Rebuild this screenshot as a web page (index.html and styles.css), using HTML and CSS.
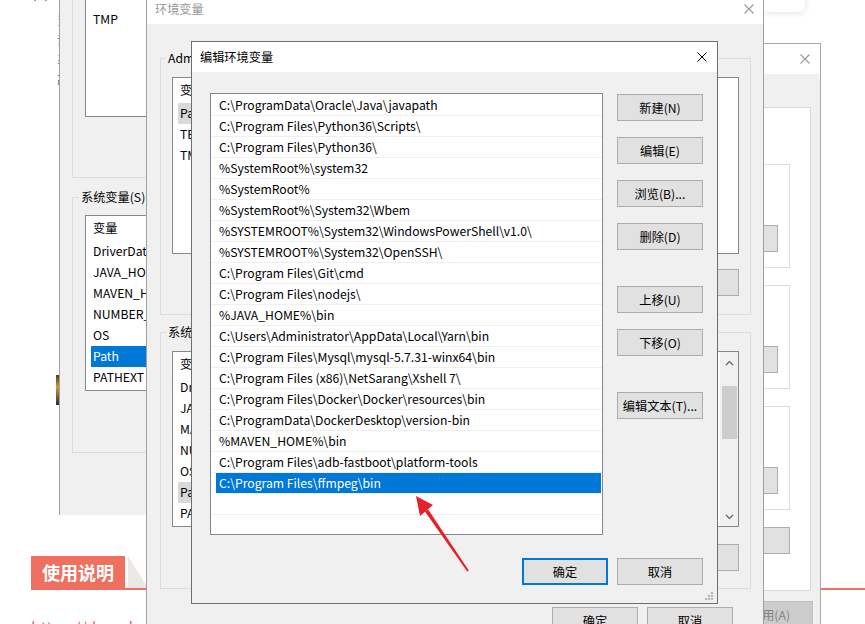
FILE: index.html
```html
<!doctype html>
<html>
	<head>
		<meta charset="utf-8">
		<title>编辑环境变量</title>
		<link rel="stylesheet" href="styles.css">
	</head>
<body>

	<!--page start-->
	<div class="page">
		<div class="top_text">新建(N)...&nbsp;&nbsp;&nbsp;编辑(E)...&nbsp;&nbsp;&nbsp;删除(D)</div>
		<div class="marks">
			<p>当</p><p>设</p><p>系</p><p>高</p>
		</div>
		<div class="shot"></div>
		<div class="usage">
			<span class="tag">使用说明</span>
			<span class="fold"></span>
		</div>
		<div class="link">https://download.csdn.net</div>
		<div class="card"></div>
	</div>
	<!--end page-->

	<!--back window start-->
	<div class="win win_back">
		<div class="box_top">
			<div class="lb lb_tmp">
				<div class="row">TMP</div>
			</div>
		</div>
		<fieldset class="gb gb_back">
			<legend>系统变量(S)</legend>
			<div class="lb lb_back">
				<div class="row head">变量</div>
				<div class="row">DriverData</div>
				<div class="row">JAVA_HOME</div>
				<div class="row">MAVEN_HOME</div>
				<div class="row">NUMBER_OF_PROCESSORS</div>
				<div class="row">OS</div>
				<div class="row sel">Path</div>
				<div class="row">PATHEXT</div>
			</div>
		</fieldset>
	</div>
	<!--end back window-->

	<!--system properties start-->
	<div class="win win_right">
		<div class="title">
			<span>系统属性</span>
			<svg class="close" width="10" height="10" viewBox="0 0 10 10"><path d="M0.5 0.5L9.5 9.5M9.5 0.5L0.5 9.5" stroke="#999" stroke-width="1.1"/></svg>
		</div>
		<div class="r_body">
			<div class="r_panel">
				<div class="r_box"><div class="btn">设置(S)...</div></div>
				<div class="r_box"><div class="btn">设置(E)...</div></div>
				<div class="r_box"><div class="btn">设置(T)...</div></div>
				<div class="r_env"><div class="btn btn_wide">环境变量(N)...</div></div>
			</div>
			<div class="r_foot"><div class="btn btn_off">应用(A)</div></div>
		</div>
	</div>
	<!--end system properties-->

	<!--env window start-->
	<div class="win win_mid">
		<div class="title">
			<span>环境变量</span>
			<svg class="close" width="10" height="10" viewBox="0 0 10 10"><path d="M0.5 0.5L9.5 9.5M9.5 0.5L0.5 9.5" stroke="#999" stroke-width="1.1"/></svg>
		</div>
		<div class="m_body">
			<fieldset class="gb gb_user">
				<legend>Administrator 的用户变量(U)</legend>
				<div class="lb lb_user">
					<div class="row head">变量</div>
					<div class="row sel_gray">Path</div>
					<div class="row">TEMP</div>
					<div class="row">TMP</div>
				</div>
				<div class="btn_row">
					<div class="btn">新建(N)...</div>
					<div class="btn">编辑(E)...</div>
					<div class="btn">删除(D)</div>
				</div>
			</fieldset>
			<fieldset class="gb gb_sys">
				<legend>系统变量(S)</legend>
				<div class="lb lb_sys">
					<div class="rows">
						<div class="row head">变量</div>
						<div class="row">DriverData</div>
						<div class="row">JAVA_HOME</div>
						<div class="row">MAVEN_HOME</div>
						<div class="row">NUMBER_OF_PROCESSORS</div>
						<div class="row">OS</div>
						<div class="row sel_gray">Path</div>
						<div class="row">PATHEXT</div>
					</div>
					<div class="scroll">
						<svg width="9" height="6" viewBox="0 0 9 6"><polyline points="1,5 4.5,1.5 8,5" fill="none" stroke="#606060" stroke-width="1.2"/></svg>
						<div class="thumb"></div>
						<svg class="down" width="9" height="6" viewBox="0 0 9 6"><polyline points="1,1 4.5,4.5 8,1" fill="none" stroke="#606060" stroke-width="1.2"/></svg>
					</div>
				</div>
				<div class="btn_row btn_row2">
					<div class="btn">新建(W)...</div>
					<div class="btn">编辑(I)...</div>
					<div class="btn">删除(L)</div>
				</div>
			</fieldset>
			<div class="m_foot">
				<div class="btn">确定</div>
				<div class="btn">取消</div>
			</div>
		</div>
	</div>
	<!--end env window-->

	<!--edit window start-->
	<div class="win win_edit">
		<div class="title">
			<span>编辑环境变量</span>
			<svg class="close" width="10" height="10" viewBox="0 0 10 10"><path d="M0.5 0.5L9.5 9.5M9.5 0.5L0.5 9.5" stroke="#000" stroke-width="1"/></svg>
		</div>
		<div class="e_body">
			<div class="e_main">
				<div class="lb lb_path">
					<div class="row">C:\ProgramData\Oracle\Java\javapath</div>
					<div class="row">C:\Program Files\Python36\Scripts\</div>
					<div class="row">C:\Program Files\Python36\</div>
					<div class="row">%SystemRoot%\system32</div>
					<div class="row">%SystemRoot%</div>
					<div class="row">%SystemRoot%\System32\Wbem</div>
					<div class="row">%SYSTEMROOT%\System32\WindowsPowerShell\v1.0\</div>
					<div class="row">%SYSTEMROOT%\System32\OpenSSH\</div>
					<div class="row">C:\Program Files\Git\cmd</div>
					<div class="row">C:\Program Files\nodejs\</div>
					<div class="row">%JAVA_HOME%\bin</div>
					<div class="row">C:\Users\Administrator\AppData\Local\Yarn\bin</div>
					<div class="row">C:\Program Files\Mysql\mysql-5.7.31-winx64\bin</div>
					<div class="row">C:\Program Files (x86)\NetSarang\Xshell 7\</div>
					<div class="row">C:\Program Files\Docker\Docker\resources\bin</div>
					<div class="row">C:\ProgramData\DockerDesktop\version-bin</div>
					<div class="row">%MAVEN_HOME%\bin</div>
					<div class="row">C:\Program Files\adb-fastboot\platform-tools</div>
					<div class="row sel">C:\Program Files\ffmpeg\bin</div>
					<div class="row"></div>
				</div>
				<div class="e_btns">
					<div class="btn">新建(N)</div>
					<div class="btn">编辑(E)</div>
					<div class="btn">浏览(B)...</div>
					<div class="btn">删除(D)</div>
					<div class="btn gap_up">上移(U)</div>
					<div class="btn">下移(O)</div>
					<div class="btn gap_up">编辑文本(T)...</div>
				</div>
			</div>
			<div class="e_foot">
				<div class="btn btn_def">确定</div>
				<div class="btn">取消</div>
			</div>
		</div>
		<svg class="grip" width="9" height="9" viewBox="0 0 9 9" fill="#b4b4b4">
			<rect x="6" y="0" width="2" height="2"/><rect x="3" y="3" width="2" height="2"/><rect x="6" y="3" width="2" height="2"/>
			<rect x="0" y="6" width="2" height="2"/><rect x="3" y="6" width="2" height="2"/><rect x="6" y="6" width="2" height="2"/>
		</svg>
	</div>
	<!--end edit window-->

	<!-- red arrow -->
	<svg class="arrow" width="865" height="624" viewBox="0 0 865 624">
		<polygon points="416,496 420,516 433,505" fill="#e5202a"/>
		<polygon points="428.2,509.4 468.8,570.4 467.2,571.6 424.9,511.6" fill="#e5202a"/>
	</svg>

</body>
</html>
```

FILE: styles.css
```css
*{margin:0;padding:0;box-sizing:border-box;}
body{width:865px;height:624px;overflow:hidden;position:relative;background:#fff;font-size:12.2px;font-family:"Noto Sans CJK SC","Noto Sans",sans-serif;color:#000;}

/*page start*/
.page{height:624px;}
.page .top_text{margin-top:-13px;padding-left:8px;height:14px;line-height:14px;font-size:12px;white-space:nowrap;color:#222;}
.page .marks{margin-top:10px;padding-left:57px;font-size:11px;line-height:19.5px;color:#4a63a8;}
.page .shot{margin:286px 0 0 56px;width:4px;height:30px;background:linear-gradient(#4a3b22,#c9a030 40%,#2b2b2b);}
.page .usage{display:flex;margin:151px 0 0 31px;border-bottom:2px solid #ef6f60;}
.page .tag{height:32px;line-height:32px;padding:0 11px;background:#ef6f60;color:#fff;font-size:18px;font-weight:bold;}
.page .fold{width:20px;height:32px;margin-left:3px;background:#ece8e5;clip-path:polygon(0 0,100% 100%,0 100%);}
.page .link{margin-top:27px;padding-left:31px;line-height:20px;font-size:16px;color:#e8695d;}
.page .card{position:absolute;left:763px;top:-12px;width:42px;height:24px;border-radius:6px;background:#fff;box-shadow:0 1px 6px rgba(0,0,0,.12);}
/*end page*/

/*common*/
.win{position:absolute;background:#f0f0f0;}
.win .title{display:flex;align-items:center;justify-content:space-between;height:30px;background:#fff;padding:0 10px 0 8px;}
.gb{border:1px solid #dcdcdc;min-width:0;}
.gb legend{padding:0 2px;margin-left:-6px;line-height:16px;}
.lb{border:1px solid #828790;background:#fff;overflow:hidden;}
.lb .row{height:21px;line-height:21px;padding-left:2px;margin-left:5px;white-space:nowrap;}
.lb .head{height:25px;line-height:25px;}
.lb .sel{background:#0078d7;color:#fff;}
.lb .sel_gray{background:#d9d9d9;width:140px;}
.btn{width:86px;height:27px;flex:none;display:flex;align-items:center;justify-content:center;background:#e1e1e1;border:1px solid #adadad;white-space:nowrap;}

/*back window*/
.win_back{left:59px;top:0;width:600px;height:515px;border-left:1px solid #a0a0a0;padding-left:12px;}
.win_back .box_top{margin-top:-20px;height:198px;width:200px;border:1px solid #dcdcdc;padding-left:12px;}
.win_back .lb_tmp{height:136px;padding-top:27px;}
.win_back .gb_back{margin-top:11px;width:300px;padding:0 12px 61px;}
.win_back .lb_back{margin-top:10px;height:176px;}

/*system properties*/
.win_right{left:590px;top:43px;width:231px;height:700px;border:1px solid #a8a8a8;}
.win_right .title{color:#999;}
.win_right .r_body{padding:33px 9px 0 0;}
.win_right .r_panel{background:#fff;border:1px solid #d9d9d9;padding:56px 20px 36px 10px;}
.win_right .r_box{height:104px;border:1px solid #dcdcdc;padding:60px 11px 0 0;display:flex;justify-content:flex-end;margin-bottom:17px;}
.win_right .r_env{display:flex;justify-content:flex-end;}
.win_right .btn_wide{width:140px;}
.win_right .r_foot{display:flex;justify-content:flex-end;margin:10px -2px 0 0;}
.win_right .btn_off{background:#cccccc;border-color:#bfbfbf;color:#838383;}

/*env window*/
.win_mid{left:146px;top:-7px;width:618px;height:680px;border:1px solid #a0a0a0;}
.win_mid .title{color:#9a9a9a;padding-right:9px;}
.win_mid .m_body{padding:0 12px 0 13px;}
.win_mid .gb{padding:0 11px;}
.win_mid .gb_user{margin-top:26px;padding-bottom:18px;}
.win_mid .gb_sys{margin-top:9px;padding-bottom:17px;}
.win_mid .lb_user{margin-top:11px;height:177px;}
.win_mid .lb_sys{margin-top:11px;height:176px;display:flex;}
.win_mid .rows{flex:1;}
.win_mid .scroll{width:18px;background:#f0f0f0;display:flex;flex-direction:column;align-items:center;padding:8px 0 6px 1px;}
.win_mid .thumb{width:15px;height:53px;background:#cdcdcd;margin-top:20px;}
.win_mid .scroll .down{margin-top:auto;}
.win_mid .btn_row{display:flex;justify-content:flex-end;gap:9px;margin-top:15px;}
.win_mid .btn_row2{margin-top:17px;}
.win_mid .m_foot{display:flex;justify-content:flex-end;gap:9px;margin:18px 18px 0 0;}

/*edit window*/
.win_edit{left:191px;top:41px;width:527px;height:563px;border:1px solid #6f6f6f;}
.win_edit .e_body{padding:21px 14px 0 18px;}
.win_edit .e_main{display:flex;}
.win_edit .lb_path{width:393px;height:442px;padding-top:1px;}
.win_edit .lb_path .row{height:21px;line-height:20px;margin-left:0;padding-left:8px;border-bottom:1px solid #efefef;}
.win_edit .lb_path .sel{margin:0 1px 0 5px;padding-left:3px;}
.win_edit .e_btns{display:flex;flex-direction:column;gap:16px;margin:1px 0 0 14px;}
.win_edit .gap_up{margin-top:20px;}
.win_edit .e_foot{display:flex;justify-content:flex-end;gap:9px;margin-top:23px;}
.win_edit .btn_def{border:2px solid #0078d7;}
.win_edit .grip{position:absolute;right:3px;bottom:2px;}
/*end edit window*/

.arrow{position:absolute;left:0;top:0;pointer-events:none;}
```
